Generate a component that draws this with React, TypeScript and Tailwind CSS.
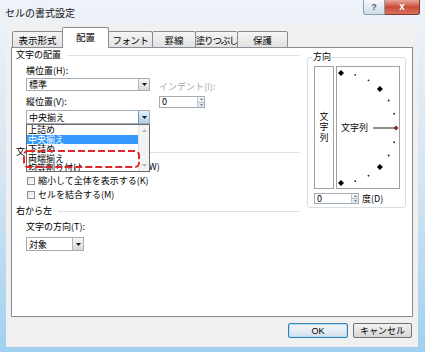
import React from "react";

function DropBtn({ active }: { active?: boolean }) {
  return (
    <div
      className={
        active
          ? "w-[11px] h-full flex items-center justify-center border-l border-[#6c98c0] bg-gradient-to-b from-[#e4f1fb] to-[#a9d1ee]"
          : "w-[11px] h-full flex items-center justify-center border-l border-[#b5b5b5] bg-gradient-to-b from-[#f6f6f6] to-[#d9d9d9]"
      }
    >
      <svg width="5" height="3" viewBox="0 0 5 3">
        <path d="M0 0H5L2.5 3Z" fill="#1a1a1a" />
      </svg>
    </div>
  );
}

function Select({ text, className, active }: { text: string; className: string; active?: boolean }) {
  return (
    <div className={"flex bg-white border border-[#a5acb5] " + className}>
      <div className="flex-1 pl-[2px] text-[9px] leading-[11px] flex items-center">{text}</div>
      <DropBtn active={active} />
    </div>
  );
}

function Spin() {
  return (
    <div className="w-[7px] h-full flex flex-col border-l border-[#c2c7cc] bg-gradient-to-b from-[#f3f6f9] to-[#dde5ec]">
      <div className="flex-1 flex items-center justify-center border-b border-[#c2c7cc]">
        <svg width="3" height="2" viewBox="0 0 3 2">
          <path d="M0 2H3L1.5 0Z" fill="#6f7b86" />
        </svg>
      </div>
      <div className="flex-1 flex items-center justify-center">
        <svg width="3" height="2" viewBox="0 0 3 2">
          <path d="M0 0H3L1.5 2Z" fill="#6f7b86" />
        </svg>
      </div>
    </div>
  );
}

function Header({ text, className }: { text: string; className?: string }) {
  return (
    <div className={"flex items-center h-[12px] pr-[5px] " + (className || "")}>
      <span className="text-[9px] leading-[12px] whitespace-nowrap">{text}</span>
      <div className="flex-1 ml-[6px] border-t border-[#dde3e8]" />
    </div>
  );
}

function Check({ text }: { text: string }) {
  return (
    <div className="flex items-center h-[14px]">
      <div className="w-[8px] h-[8px] border border-[#8f8f8f] bg-gradient-to-br from-[#e6e6e6] to-[#fbfbfb]" />
      <span className="ml-[3px] text-[9px] leading-[12px] whitespace-nowrap">{text}</span>
    </div>
  );
}

function Dial() {
  const cx = 4;
  const cy = 61;
  const r = 55;
  const pts: { x: number; y: number; a: number }[] = [];
  for (let a = -90; a <= 90; a += 15) {
    const rad = (a * Math.PI) / 180;
    pts.push({ x: cx + r * Math.cos(rad), y: cy - r * Math.sin(rad), a });
  }
  return (
    <div className="relative w-[64px] h-[123px] border border-[#a0a0a0] bg-white">
      <svg className="absolute left-0 top-0" width="62" height="121" viewBox="0 0 62 121">
        <line x1="36" y1="61" x2="57" y2="61" stroke="#6b6b6b" strokeWidth="1.5" />
        {pts.map((p) => {
          if (p.a === 0) {
            return (
              <polygon
                key={p.a}
                points={`${p.x},${p.y - 2.5} ${p.x + 2.5},${p.y} ${p.x},${p.y + 2.5} ${p.x - 2.5},${p.y}`}
                fill="#8a2a22"
              />
            );
          }
          if (p.a % 45 === 0) {
            return (
              <polygon
                key={p.a}
                points={`${p.x},${p.y - 3} ${p.x + 3},${p.y} ${p.x},${p.y + 3} ${p.x - 3},${p.y}`}
                fill="#000"
              />
            );
          }
          return <circle key={p.a} cx={p.x} cy={p.y} r="0.9" fill="#222" />;
        })}
      </svg>
      <span className="absolute left-[4px] top-[55px] text-[9px] leading-[12px] whitespace-nowrap">文字列</span>
    </div>
  );
}

const tabs = [
  { t: "表示形式", w: "w-[51px]", tr: "" },
  { t: "配置", w: "w-[47px]", tr: "", sel: true },
  { t: "フォント", w: "w-[45px]", tr: "tracking-[-0.5px]" },
  { t: "罫線", w: "w-[44px]", tr: "" },
  { t: "塗りつぶし", w: "w-[43px]", tr: "tracking-[-1.2px]" },
  { t: "保護", w: "w-[51px]", tr: "" },
];

export default function App() {
  return (
    <div className="w-[425px] h-[352px] overflow-hidden flex flex-col bg-gradient-to-b from-[#eef3f8] via-[#d6e5f2] to-[#9fd0ef] font-['Noto_Sans_CJK_JP','Noto_Sans',sans-serif] text-black">
      {/* title bar */}
      <div className="h-[23px] flex items-start justify-between pl-[5px] pr-[5px]">
        <span className="mt-[7px] text-[10px] leading-[12px] text-[#111]">セルの書式設定</span>
        <div className="flex">
          <div className="w-[22px] h-[15px] flex items-center justify-center border border-t-0 border-[#8a9db2] rounded-bl-[3px] bg-gradient-to-b from-[#f7f9fb] to-[#cfdae6] text-[9px] leading-[9px] text-[#47607a] font-['Liberation_Sans',sans-serif] font-bold">
            ?
          </div>
          <div className="w-[35px] h-[15px] flex items-center justify-center border border-t-0 border-l-0 border-[#7d3a33] rounded-br-[3px] bg-gradient-to-b from-[#e8a89c] via-[#c94a35] to-[#d9725d] text-white text-[10px] leading-[10px] font-['Liberation_Sans',sans-serif] font-bold">
            x
          </div>
        </div>
      </div>

      {/* client */}
      <div className="ml-[6px] w-[412px] h-[324px] bg-[#f0f0f0] flex flex-col">
        {/* tabs */}
        <div className="relative z-10 flex items-end h-[25px] pl-[6px]">
          {tabs.map((tab, i) =>
            tab.sel ? (
              <div
                key={tab.t}
                className={
                  tab.w +
                  " -ml-px h-[21px] flex items-center justify-center pb-[2px] bg-white border border-b-0 border-[#898c95] rounded-t-[2px] text-[9.5px] leading-[12px] whitespace-nowrap"
                }
              >
                {tab.t}
              </div>
            ) : (
              <div
                key={tab.t}
                className={
                  tab.w +
                  (i === 0 ? "" : " -ml-px") +
                  " h-[17px] flex items-center justify-center bg-gradient-to-b from-[#f5f5f5] to-[#e1e1e1] border border-[#898c95] rounded-t-[2px] text-[9.5px] leading-[12px] whitespace-nowrap " +
                  tab.tr
                }
              >
                {tab.t}
              </div>
            )
          )}
        </div>

        {/* panel */}
        <div className="relative -mt-px ml-[5px] w-[402px] h-[270px] bg-white border border-[#898c95] flex">
          {/* left column */}
          <div className="w-[293px] flex flex-col pl-[4px] pt-[1px]">
            <Header text="文字の配置" />
            <div className="flex pl-[10px]">
              <div className="w-[124px] flex flex-col">
                <div className="mt-[4px] h-[12px] text-[9px] leading-[12px]">横位置(H):</div>
                <Select text="標準" className="mt-[1px] h-[13px] w-[124px]" />
                <div className="mt-[5px] h-[12px] text-[9px] leading-[12px]">縦位置(V):</div>
                <Select text="中央揃え" className="mt-[2px] h-[14px] w-[124px] border-[#5a8fc0]" active />
              </div>
              <div className="ml-[9px] flex flex-col">
                <div className="mt-[20px] h-[12px] text-[9px] leading-[12px] text-[#a7a7a7] whitespace-nowrap">
                  インデント(I):
                </div>
                <div className="mt-[3px] w-[46px] h-[12px] flex bg-white border border-[#a5acb5]">
                  <div className="flex-1 pl-[2px] text-[9px] leading-[10px]">0</div>
                  <Spin />
                </div>
              </div>
            </div>

            <Header text="文字の制御" className="mt-[22px]" />
            <div className="mt-[2px] pl-[11px] flex flex-col">
              <Check text="折り返して全体を表示する(W)" />
              <Check text="縮小して全体を表示する(K)" />
              <Check text="セルを結合する(M)" />
            </div>

            <Header text="右から左" className="mt-[3px]" />
            <div className="pl-[10px] flex flex-col">
              <div className="mt-[4px] h-[12px] text-[9px] leading-[12px]">文字の方向(T):</div>
              <Select text="対象" className="mt-[4px] h-[14px] w-[58px]" />
            </div>
          </div>

          {/* orientation group */}
          <fieldset className="ml-[2px] mt-[3px] w-[99px] h-[157px] border border-[#d5dfe5] rounded-[3px]">
            <legend className="ml-[4px] px-[1px] text-[9px] leading-[12px]">方向</legend>
            <div className="pl-[6px] pt-[3px] flex flex-col">
              <div className="flex">
                <div className="w-[20px] h-[123px] border border-[#a0a0a0] bg-white flex flex-col items-center justify-center text-[9px] leading-[10.5px]">
                  <span>文</span>
                  <span>字</span>
                  <span>列</span>
                </div>
                <div className="ml-[2px]">
                  <Dial />
                </div>
              </div>
              <div className="mt-[4px] flex items-center">
                <div className="w-[45px] h-[11px] flex bg-white border border-[#a5acb5]">
                  <div className="flex-1 pl-[2px] text-[9px] leading-[9px]">0</div>
                  <Spin />
                </div>
                <span className="ml-[3px] text-[9px] leading-[11px] whitespace-nowrap">度(D)</span>
              </div>
            </div>
          </fieldset>

          {/* opened dropdown list */}
          <div className="absolute left-[14px] top-[76px] w-[124px] h-[48px] bg-white border border-[#6a6a6a] flex overflow-hidden">
            <div className="flex-1 flex flex-col text-[9px] leading-[9.5px]">
              <div className="h-[9.5px] pl-[1px] whitespace-nowrap">上詰め</div>
              <div className="h-[9.5px] pl-[1px] bg-[#3399ff] text-white whitespace-nowrap">中央揃え</div>
              <div className="h-[9.5px] pl-[1px] whitespace-nowrap">下詰め</div>
              <div className="h-[9.5px] pl-[1px] whitespace-nowrap">両端揃え</div>
              <div className="h-[9.5px] pl-[1px] whitespace-nowrap">均等割り付け</div>
            </div>
            <div className="w-[11px] h-full bg-[#f3f3f3] border-l border-[#e3e3e3] flex flex-col items-center justify-between py-[4px]">
              <svg width="5" height="3" viewBox="0 0 5 3">
                <path d="M0 3H5L2.5 0Z" fill="#b8b8b8" />
              </svg>
              <svg width="5" height="3" viewBox="0 0 5 3">
                <path d="M0 0H5L2.5 3Z" fill="#b8b8b8" />
              </svg>
            </div>
          </div>

          {/* red dashed annotation */}
          <svg className="absolute left-[11px] top-[102px]" width="118" height="19" viewBox="0 0 118 19">
            <rect x="1" y="1" width="115" height="16" rx="4" fill="none" stroke="#e0252b" strokeWidth="2" strokeDasharray="7 3" />
          </svg>
        </div>

        {/* buttons */}
        <div className="mt-[6px] flex justify-end gap-[5px] pr-[6px]">
          <div className="w-[60px] h-[15px] flex items-center justify-center rounded-[2px] border border-[#3c7fb1] bg-gradient-to-b from-[#f2f2f2] via-[#e6eef5] to-[#cfdfec] shadow-[inset_0_0_0_1px_#aee0f5] text-[9px] leading-[12px] font-['Liberation_Sans',sans-serif]">
            OK
          </div>
          <div className="w-[59px] h-[15px] flex items-center justify-center rounded-[2px] border border-[#707070] bg-gradient-to-b from-[#f2f2f2] to-[#d7d7d7] text-[9px] leading-[12px]">
            キャンセル
          </div>
        </div>
      </div>
    </div>
  );
}
